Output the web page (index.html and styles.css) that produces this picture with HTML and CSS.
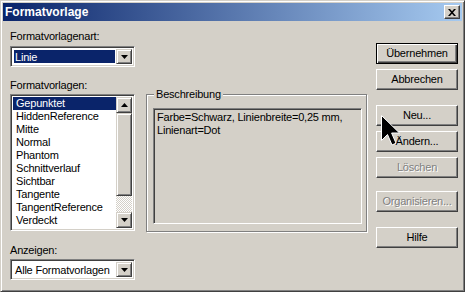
FILE: index.html
```html
<!DOCTYPE html>
<html lang="de">
<head>
  <meta charset="UTF-8">
  <title>Formatvorlage</title>
  <link rel="stylesheet" href="styles.css">
</head>
<body>
  <div class="window">
    <div class="titlebar">
      <span class="title">Formatvorlage</span>
      <span class="close">
        <svg width="8" height="7" viewBox="0 0 8 7"><path d="M0 0h2l2 2.2L6 0h2L5 3.5 8 7H6L4 4.8 2 7H0l3-3.5z" fill="#000"/></svg>
      </span>
    </div>

    <div class="main">
      <div class="col-left">
        <div class="lbl">Formatvorlagenart:</div>
        <div class="combo">
          <span class="combo-value selected">Linie</span>
          <span class="drop"><svg width="7" height="4" viewBox="0 0 7 4"><path d="M0 0h7L3.5 4z" fill="#000"/></svg></span>
        </div>

        <div class="lbl lbl-list">Formatvorlagen:</div>
        <div class="listbox">
          <ul class="items">
            <li class="selected">Gepunktet</li>
            <li>HiddenReference</li>
            <li>Mitte</li>
            <li>Normal</li>
            <li>Phantom</li>
            <li>Schnittverlauf</li>
            <li>Sichtbar</li>
            <li>Tangente</li>
            <li>TangentReference</li>
            <li>Verdeckt</li>
            <li>VisibleReference</li>
          </ul>
          <div class="vscroll">
            <span class="sbtn"><svg width="7" height="4" viewBox="0 0 7 4"><path d="M3.5 0L7 4H0z" fill="#000"/></svg></span>
            <span class="thumb"></span>
            <span class="track"></span>
            <span class="sbtn"><svg width="7" height="4" viewBox="0 0 7 4"><path d="M0 0h7L3.5 4z" fill="#000"/></svg></span>
          </div>
        </div>

        <div class="lbl lbl-show">Anzeigen:</div>
        <div class="combo">
          <span class="combo-value">Alle Formatvorlagen</span>
          <span class="drop"><svg width="7" height="4" viewBox="0 0 7 4"><path d="M0 0h7L3.5 4z" fill="#000"/></svg></span>
        </div>
      </div>

      <div class="group">
        <span class="legend">Beschreibung</span>
        <div class="desc">Farbe=Schwarz, Linienbreite=0,25 mm, Linienart=Dot</div>
      </div>

      <div class="buttons">
        <div class="btn btn-default">Übernehmen</div>
        <div class="btn">Abbrechen</div>
        <div class="btn gap-big">Neu...</div>
        <div class="btn">Ändern...</div>
        <div class="btn disabled">Löschen</div>
        <div class="btn disabled gap-mid">Organisieren...</div>
        <div class="btn gap-big">Hilfe</div>
      </div>
    </div>

    <svg class="cursor" width="20" height="32" viewBox="0 0 20 32">
      <path d="M0.5 0.5V25.5L6.5 19.5L11 30L15 28.2L10.6 18H18.5Z" fill="#000" stroke="#fff" stroke-width="1"/>
    </svg>
  </div>
</body>
</html>
```

FILE: styles.css
```css
body {
  margin: 0;
  font-family: "Liberation Sans", Arial, sans-serif;
  font-size: 11px;
  letter-spacing: -0.2px;
  color: #000;
}

.window {
  position: relative;
  width: 465px;
  height: 292px;
  box-sizing: border-box;
  background-color: #d4d0c8;
  border: 1px solid;
  border-color: #d4d0c8 #404040 #404040 #d4d0c8;
  box-shadow: inset 1px 1px #fff, inset -1px -1px #808080;
  padding: 2px;
}

.titlebar {
  height: 18px;
  display: flex;
  align-items: center;
  justify-content: space-between;
  padding: 0 2px;
  background: linear-gradient(to right, #0a246a, #a6caf0);
}

.title {
  color: #fff;
  font-weight: bold;
  font-size: 12px;
  letter-spacing: 0;
}

.close {
  width: 16px;
  height: 14px;
  box-sizing: border-box;
  display: flex;
  align-items: center;
  justify-content: center;
  background-color: #d4d0c8;
  border: 1px solid;
  border-color: #fff #404040 #404040 #fff;
  box-shadow: inset -1px -1px #808080;
}

.main {
  display: flex;
  align-items: flex-start;
  padding: 9px 0 0 7px;
}

.col-left {
  width: 125px;
  display: flex;
  flex-direction: column;
}

.lbl {
  height: 13px;
  line-height: 13px;
}

.lbl-list {
  margin-top: 12px;
}

.lbl-show {
  margin-top: 13px;
}

.combo {
  margin-top: 3px;
  height: 21px;
  box-sizing: border-box;
  display: flex;
  align-items: stretch;
  background-color: #fff;
  border: 1px solid;
  border-color: #808080 #fff #fff #808080;
  box-shadow: inset 1px 1px #404040, inset -1px -1px #d4d0c8;
  padding: 2px 2px 2px 2px;
}

.lbl-show + .combo {
  margin-top: 2px;
}

.combo-value {
  flex: 1;
  margin: 1px 1px 1px 1px;
  padding-left: 1px;
  line-height: 15px;
}

.selected {
  background-color: #0a246a;
  color: #fff;
}

.drop, .sbtn {
  width: 16px;
  box-sizing: border-box;
  display: flex;
  align-items: center;
  justify-content: center;
  background-color: #d4d0c8;
  border: 1px solid;
  border-color: #d4d0c8 #404040 #404040 #d4d0c8;
  box-shadow: inset 1px 1px #fff, inset -1px -1px #808080;
}

.listbox {
  margin-top: 2px;
  height: 137px;
  box-sizing: border-box;
  display: flex;
  background-color: #fff;
  border: 1px solid;
  border-color: #808080 #fff #fff #808080;
  box-shadow: inset 1px 1px #404040, inset -1px -1px #d4d0c8;
  padding: 2px;
  overflow: hidden;
}

.items {
  flex: 1;
  margin: 0;
  padding: 0;
  list-style: none;
  overflow: hidden;
}

.items li {
  height: 13px;
  line-height: 13px;
  padding-left: 3px;
  white-space: nowrap;
}

.vscroll {
  width: 16px;
  display: flex;
  flex-direction: column;
}

.sbtn {
  height: 16px;
}

.thumb {
  height: 85px;
  box-sizing: border-box;
  background-color: #d4d0c8;
  border: 1px solid;
  border-color: #d4d0c8 #404040 #404040 #d4d0c8;
  box-shadow: inset 1px 1px #fff, inset -1px -1px #808080;
}

.track {
  height: 16px;
  background-color: #d4d0c8;
  background-image: conic-gradient(#fff 25%, #d4d0c8 0 50%, #fff 0 75%, #d4d0c8 0);
  background-size: 2px 2px;
}

.group {
  position: relative;
  margin: 64px 0 0 11px;
  width: 221px;
  height: 138px;
  box-sizing: border-box;
  display: flex;
  border: 1px solid #808080;
  box-shadow: inset 1px 1px #fff, 1px 1px #fff;
  padding: 13px 4px 7px 6px;
}

.legend {
  position: absolute;
  top: -7px;
  left: 7px;
  padding: 0 2px;
  line-height: 13px;
  background-color: #d4d0c8;
}

.desc {
  flex: 1;
  box-sizing: border-box;
  border: 1px solid;
  border-color: #808080 #fff #fff #808080;
  box-shadow: inset 1px 1px #404040, inset -1px -1px #d4d0c8;
  padding: 2px 3px;
  line-height: 13px;
}

.buttons {
  margin: 13px 0 0 9px;
  display: flex;
  flex-direction: column;
  gap: 5px;
}

.btn {
  width: 82px;
  height: 21px;
  box-sizing: border-box;
  line-height: 19px;
  text-align: center;
  background-color: #d4d0c8;
  border: 1px solid;
  border-color: #fff #404040 #404040 #fff;
  box-shadow: inset -1px -1px #808080;
}

.btn-default {
  border-color: #000;
  box-shadow: inset 1px 1px #fff, inset -1px -1px #404040, inset -2px -2px #808080;
}

.gap-big {
  margin-top: 10px;
}

.gap-mid {
  margin-top: 8px;
}

.disabled {
  color: #808080;
  text-shadow: 1px 1px #fff;
}

.cursor {
  position: absolute;
  left: 380px;
  top: 114px;
}
```
